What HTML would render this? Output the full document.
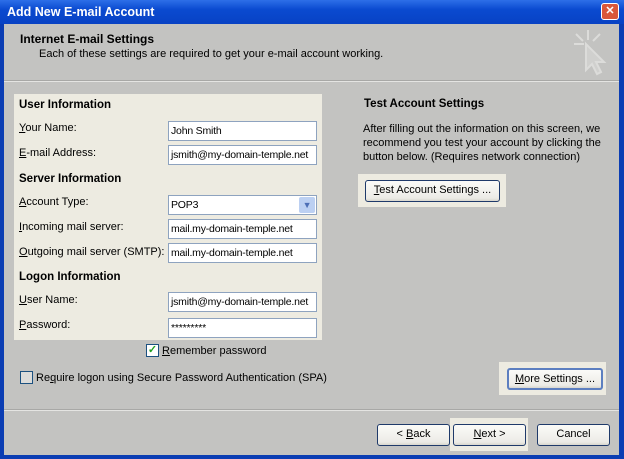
<!DOCTYPE html><html><head><style>
*{margin:0;padding:0;box-sizing:border-box}
body{width:624px;height:459px;overflow:hidden;background:#0b3db3;font-family:"Liberation Sans",sans-serif;font-size:11px;color:#000;position:relative}
.a{position:absolute;white-space:nowrap}
#win{position:absolute;left:4px;top:24px;width:615px;height:431px;background:#c3c3c1}
.title{left:0;top:0;width:624px;height:24px;background:linear-gradient(#2d6fe8,#0a4ad0 40%,#0842c4);color:#fff;font-weight:bold;font-size:12.5px;padding:5px 0 0 7px}
.close{left:601px;top:3px;width:18px;height:17px;background:#d9573a;border:1px solid #fff;border-radius:3px;color:#fff;font-size:11px;text-align:center;line-height:14px;font-weight:bold}
.panel{background:#edebe1}
.inp{position:absolute;background:#fff;border:1px solid #8ea3bf;height:20px;padding:3px 0 0 2px;font-size:10.5px;letter-spacing:-0.2px;white-space:nowrap;overflow:hidden}
.btn{position:absolute;border:1px solid #1f3a6a;border-radius:3px;background:linear-gradient(#fbfbf8,#ecebe6 85%,#d8d6ce);text-align:center;font-size:11px;line-height:19px;white-space:nowrap}
u{text-decoration:underline}
</style></head><body>
<div class="a title">Add New E-mail Account</div>
<div class="a close">✕</div>
<div id="win"></div>
<div class="a" style="left:20px;top:32px;font-weight:bold;font-size:12px">Internet E-mail Settings</div>
<div class="a" style="left:39px;top:48px">Each of these settings are required to get your e-mail account working.</div>
<svg class="a" style="left:570px;top:26px" width="40" height="52"><g stroke="#dcdcda" stroke-width="2" fill="none"><path d="M18 4v10M6 8l7 7M4 18h10M30 8l-7 7"/><path d="M16 18l0 26 6-6 5 10 4-2-5-10 8 0z" fill="#d0d0ce"/></g></svg>
<div class="a" style="left:4px;top:80px;width:615px;height:1px;background:#a8a8a6"></div>
<div class="a" style="left:4px;top:81px;width:615px;height:1px;background:#e4e4e2"></div>
<div class="a panel" style="left:14px;top:94px;width:308px;height:246px"></div>
<div class="a" style="left:19px;top:99px;font-weight:bold;font-size:11.5px">User Information</div>
<div class="a" style="left:19px;top:122px"><u>Y</u>our Name:</div>
<div class="inp" style="left:168px;top:121px;width:149px">John Smith</div>
<div class="a" style="left:19px;top:147px"><u>E</u>-mail Address:</div>
<div class="inp" style="left:168px;top:145px;width:149px">jsmith@my-domain-temple.net</div>
<div class="a" style="left:19px;top:173px;font-weight:bold;font-size:11.5px">Server Information</div>
<div class="a" style="left:19px;top:196px"><u>A</u>ccount Type:</div>
<div class="inp" style="left:168px;top:195px;width:149px">POP3<div style="position:absolute;right:1px;top:1px;width:16px;height:16px;background:#bcd0f2;border-radius:2px;color:#4d6fb5;font-size:9px;text-align:center;line-height:16px">▼</div></div>
<div class="a" style="left:19px;top:221px"><u>I</u>ncoming mail server:</div>
<div class="inp" style="left:168px;top:219px;width:149px">mail.my-domain-temple.net</div>
<div class="a" style="left:19px;top:246px"><u>O</u>utgoing mail server (SMTP):</div>
<div class="inp" style="left:168px;top:243px;width:149px">mail.my-domain-temple.net</div>
<div class="a" style="left:19px;top:271px;font-weight:bold;font-size:11.5px">Logon Information</div>
<div class="a" style="left:19px;top:294px"><u>U</u>ser Name:</div>
<div class="inp" style="left:168px;top:292px;width:149px">jsmith@my-domain-temple.net</div>
<div class="a" style="left:19px;top:319px"><u>P</u>assword:</div>
<div class="inp" style="left:168px;top:318px;width:149px">*********</div>
<div class="a" style="left:146px;top:344px;width:13px;height:13px;background:#fff;border:1px solid #1c5180;color:#21a121;font-size:11px;line-height:11px;text-align:center;font-weight:bold">✓</div>
<div class="a" style="left:162px;top:345px"><u>R</u>emember password</div>
<div class="a" style="left:20px;top:371px;width:13px;height:13px;background:#dcdcda;border:1px solid #1c5180"></div>
<div class="a" style="left:36px;top:372px">Re<u>q</u>uire logon using Secure Password Authentication (SPA)</div>
<div class="a" style="left:364px;top:98px;font-weight:bold;font-size:11.5px">Test Account Settings</div>
<div class="a" style="left:363px;top:122px;line-height:14px">After filling out the information on this screen, we<br>recommend you test your account by clicking the<br>button below. (Requires network connection)</div>
<div class="a panel" style="left:358px;top:174px;width:148px;height:33px"></div>
<div class="btn" style="left:365px;top:180px;width:135px;height:22px"><u>T</u>est Account Settings ...</div>
<div class="a panel" style="left:499px;top:362px;width:107px;height:33px"></div>
<div class="btn" style="left:507px;top:368px;width:96px;height:22px;border:2px solid #5d7fc0"><u>M</u>ore Settings ...</div>
<div class="a" style="left:4px;top:409px;width:615px;height:1px;background:#a8a8a6"></div>
<div class="a" style="left:4px;top:410px;width:615px;height:1px;background:#e4e4e2"></div>
<div class="a panel" style="left:450px;top:418px;width:78px;height:33px"></div>
<div class="btn" style="left:377px;top:424px;width:73px;height:22px">&lt; <u>B</u>ack</div>
<div class="btn" style="left:453px;top:424px;width:73px;height:22px"><u>N</u>ext &gt;</div>
<div class="btn" style="left:537px;top:424px;width:73px;height:22px">Cancel</div>
</body></html>
